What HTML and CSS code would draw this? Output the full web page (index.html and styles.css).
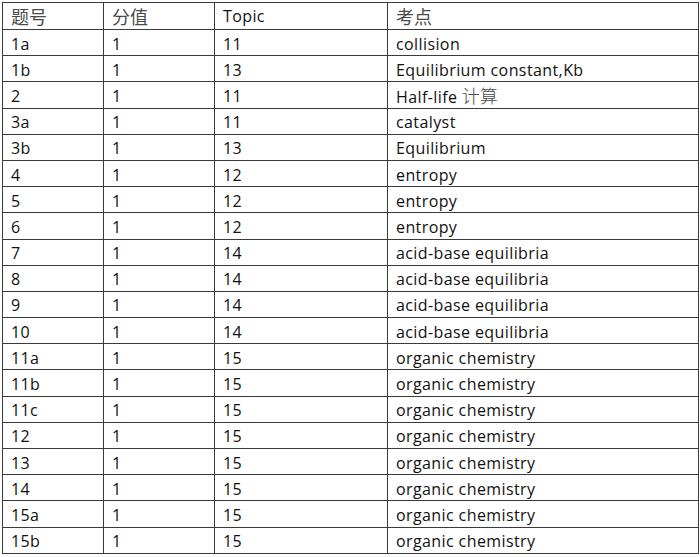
FILE: index.html
```html
<!DOCTYPE html>
<html lang="zh">
<head>
<meta charset="utf-8">
<title>考点</title>
<link rel="stylesheet" href="styles.css">
</head>
<body>
<table class="grid">
  <colgroup>
    <col class="c1"><col class="c2"><col class="c3"><col class="c4">
  </colgroup>
  <thead>
    <tr class="head"><th class="cjk">题号</th><th class="cjk">分值</th><th>Topic</th><th class="cjk">考点</th></tr>
  </thead>
  <tbody>
    <tr><td>1a</td><td>1</td><td>11</td><td>collision</td></tr>
    <tr><td>1b</td><td>1</td><td>13</td><td>Equilibrium constant,Kb</td></tr>
    <tr><td>2</td><td>1</td><td>11</td><td>Half-life <span class="cjk">计算</span></td></tr>
    <tr><td>3a</td><td>1</td><td>11</td><td>catalyst</td></tr>
    <tr><td>3b</td><td>1</td><td>13</td><td>Equilibrium</td></tr>
    <tr><td>4</td><td>1</td><td>12</td><td>entropy</td></tr>
    <tr><td>5</td><td>1</td><td>12</td><td>entropy</td></tr>
    <tr><td>6</td><td>1</td><td>12</td><td>entropy</td></tr>
    <tr><td>7</td><td>1</td><td>14</td><td>acid-base equilibria</td></tr>
    <tr><td>8</td><td>1</td><td>14</td><td>acid-base equilibria</td></tr>
    <tr><td>9</td><td>1</td><td>14</td><td>acid-base equilibria</td></tr>
    <tr><td>10</td><td>1</td><td>14</td><td>acid-base equilibria</td></tr>
    <tr><td>11a</td><td>1</td><td>15</td><td>organic chemistry</td></tr>
    <tr><td>11b</td><td>1</td><td>15</td><td>organic chemistry</td></tr>
    <tr><td>11c</td><td>1</td><td>15</td><td>organic chemistry</td></tr>
    <tr><td>12</td><td>1</td><td>15</td><td>organic chemistry</td></tr>
    <tr><td>13</td><td>1</td><td>15</td><td>organic chemistry</td></tr>
    <tr><td>14</td><td>1</td><td>15</td><td>organic chemistry</td></tr>
    <tr><td>15a</td><td>1</td><td>15</td><td>organic chemistry</td></tr>
    <tr><td>15b</td><td>1</td><td>15</td><td>organic chemistry</td></tr>
  </tbody>
</table>
</body>
</html>
```

FILE: styles.css
```css
html, body {
  margin: 0;
  padding: 0;
  background: #ffffff;
}

body {
  padding: 2px 0 0 2px;
  font-family: "Open Sans", "Noto Sans CJK SC", sans-serif;
  font-size: 16px;
  letter-spacing: 0.4px;
  color: #111111;
}

.grid {
  border-collapse: collapse;
  table-layout: fixed;
  width: 696px;
}

.c1 { width: 101px; }
.c2 { width: 111px; }
.c3 { width: 173px; }
.c4 { width: 311px; }

.grid th,
.grid td {
  border: 1px solid #3a3a3a;
  padding: 2px 8px 0 8px;
  text-align: left;
  font-weight: 400;
  height: 26.2px;
  box-sizing: border-box;
  vertical-align: middle;
  white-space: nowrap;
  line-height: 20px;
}

.grid .head th {
  height: 27px;
  padding-top: 0;
}

.cjk {
  font-family: "Noto Sans CJK SC", sans-serif;
  font-weight: 300;
  font-size: 18px;
  letter-spacing: 0;
  color: #4a4a4a;
}
```
